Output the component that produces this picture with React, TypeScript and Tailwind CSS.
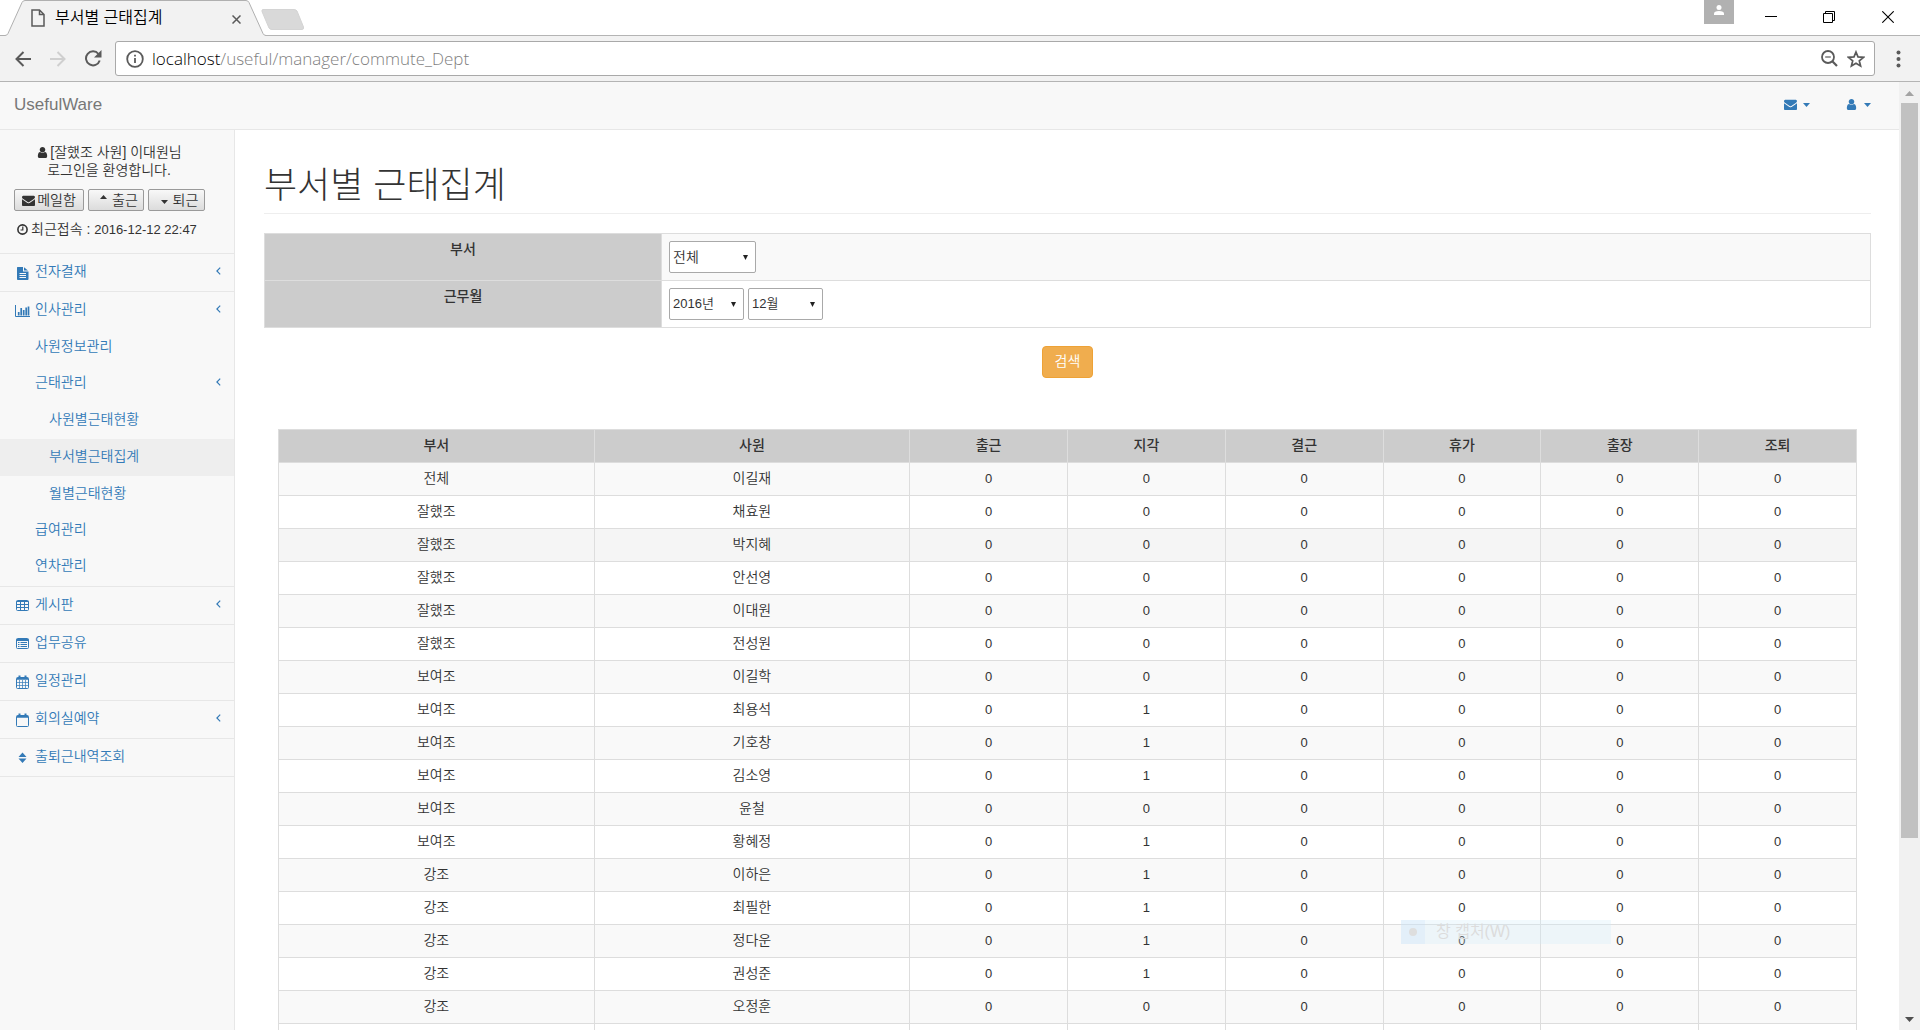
import type { ReactNode } from "react";

const kr = "font-['Liberation_Sans','Noto_Sans_CJK_KR',sans-serif] font-[350]";

const envelopePath =
  "M1792 710v794q0 66-47 113t-113 47h-1472q-66 0-113-47t-47-113v-794q44 49 101 87 362 246 497 345 57 42 92.5 65.5t94.5 48 110 24.5h2q51 0 110-24.5t94.5-48 92.5-65.5q170-123 498-345 57-39 100-87zm0-294q0 79-49 151t-122 123q-376 261-468 325-10 7-42.5 31t-54 38.5-52 32.5-57.5 27-50 9h-2q-23 0-50-9t-57.5-27-52-32.5-54-38.5-42.5-31q-91-64-262-182.5t-205-142.5q-62-42-117-115.5t-55-136.5q0-78 41.5-130t118.5-52h1472q65 0 112.5 47t47.5 113z";
const userPath =
  "M1536 1399q0 109-62.5 187t-150.5 78h-854q-88 0-150.5-78t-62.5-187q0-85 8.5-160.5t31.5-152 58.5-131 94-89 134.5-34.5q131 128 313 128t313-128q76 0 134.5 34.5t94 89 58.5 131 31.5 152 8.5 160.5zm-256-887q0 159-112.5 271.5t-271.5 112.5-271.5-112.5-112.5-271.5 112.5-271.5 271.5-112.5 271.5 112.5 112.5 271.5z";

function Envelope() {
  return (
    <svg viewBox="0 0 1792 1792" className="h-[13px] w-[13px] shrink-0" fill="currentColor" aria-hidden="true">
      <path d={envelopePath} />
    </svg>
  );
}

function User() {
  return (
    <svg viewBox="0 0 1792 1792" className="h-[13px] w-[13px] shrink-0" fill="currentColor" aria-hidden="true">
      <path d={userPath} />
    </svg>
  );
}

function Caret({ up = false }: { up?: boolean }) {
  return (
    <svg viewBox="0 0 7 4" className="h-1 w-[7px] shrink-0" fill="currentColor" aria-hidden="true">
      <path d={up ? "M0 4 3.5 0 7 4Z" : "M0 0H7L3.5 4Z"} />
    </svg>
  );
}

function Svg({ children, w = 15 }: { children: ReactNode; w?: number }) {
  return (
    <svg width={w} height="15" viewBox={`0 0 ${w} 15`} className="shrink-0" fill="none" stroke="currentColor" aria-hidden="true">
      {children}
    </svg>
  );
}

const icons: Record<string, ReactNode> = {
  file: (
    <Svg>
      <path d="M2 2.500Q2 2 2.600 2H8v4.400H13.500V14q0 1-.8 1H2.800Q2 15 2 14Z" fill="currentColor" stroke="none" />
      <path d="M9 2.200 13 5.600H9Z" fill="currentColor" stroke="none" />
      <path d="M4.500 8.500H11M4.500 10.500H11M4.500 12.500H11" stroke="#f8f8f8" strokeWidth="1" />
    </Svg>
  ),
  chart: (
    <Svg>
      <path d="M.5 2V13.500H15" />
      <path d="M3.700 12.500V9M6.200 12.500V5M8.700 12.500V7M11.200 12.500V4.500M13.500 12.500V3.500" strokeWidth="1.700" />
    </Svg>
  ),
  table: (
    <Svg>
      <rect x="1.500" y="2.500" width="12" height="10" rx="1" />
      <path d="M1.500 3.500H13.500M1.500 6.500H13.500M1.500 9.500H13.500M5.500 3V12.500M9.500 3V12.500" />
    </Svg>
  ),
  list: (
    <Svg>
      <rect x="1.500" y="2.500" width="12" height="10" rx="1" />
      <path d="M1.500 4H13.500" strokeWidth="2" />
      <path d="M3 6.500H4.500M5.500 6.500H12M3 8.500H4.500M5.500 8.500H12M3 10.500H4.500M5.500 10.500H12" />
    </Svg>
  ),
  calendar: (
    <Svg>
      <rect x="1.500" y="3.500" width="12" height="11" rx="1" />
      <path d="M2 4.800H13M4.500 1.500V4.500M10.500 1.500V4.500" strokeWidth="2" />
      <path d="M4.500 6V14M7.500 6V14M10.500 6V14M2 8.500H13M2 11.500H13" strokeWidth=".7" />
    </Svg>
  ),
  calendarO: (
    <Svg>
      <rect x="1.500" y="3.500" width="12" height="11" rx="1" />
      <path d="M2 4.800H13M4.500 1.500V4.500M10.500 1.500V4.500" strokeWidth="2" />
    </Svg>
  ),
  sort: (
    <Svg>
      <path d="M3.500 7 7.500 2.500 11.500 7ZM3.500 8.500H11.500L7.500 13Z" fill="currentColor" stroke="none" />
    </Svg>
  ),
};

function AngleLeft() {
  return (
    <svg viewBox="0 0 5 8" className="mr-[13px] ml-auto h-2 w-[5px]" fill="none" stroke="currentColor" strokeWidth="1.2" aria-hidden="true">
      <path d="M4.200.600.900 4 4.200 7.400" />
    </svg>
  );
}

type Item = { label: string; icon?: string; arrow?: boolean; active?: boolean; children?: Item[] };

const menu: Item[] = [
  { label: "전자결재", icon: "file", arrow: true },
  {
    label: "인사관리",
    icon: "chart",
    arrow: true,
    children: [
      { label: "사원정보관리" },
      {
        label: "근태관리",
        arrow: true,
        children: [{ label: "사원별근태현황" }, { label: "부서별근태집계", active: true }, { label: "월별근태현황" }],
      },
      { label: "급여관리" },
      { label: "연차관리" },
    ],
  },
  { label: "게시판", icon: "table", arrow: true },
  { label: "업무공유", icon: "list" },
  { label: "일정관리", icon: "calendar" },
  { label: "회의실예약", icon: "calendarO", arrow: true },
  { label: "출퇴근내역조회", icon: "sort" },
];

function TabStrip() {
  return (
    <div className="flex h-9 items-start border-b border-[#b4b4b4] bg-white">
      <div className="relative h-9 w-[265px] shrink-0">
        <svg width="305" height="36" viewBox="0 0 305 36" className="absolute top-0 left-0" aria-hidden="true">
          <path d="M0 35.500H5Q7 35.500 8 33.500L22 2.500Q23 .5 25 .5H246Q248 .5 249 2.500L263 33.500Q264 35.500 266 35.500V36H0Z" fill="#f2f2f2" />
          <path d="M0 35.500H5Q7 35.500 8 33.500L22 2.500Q23 .5 25 .5H246Q248 .5 249 2.500L263 33.500Q264 35.500 266 35.500" fill="none" stroke="#b0b0b0" />
          <path d="M263 9.500H294Q296 9.500 297 11L303.500 27Q304 29.500 302 29.500H272Q270 29.500 269 28L262 11.500Q261.500 9.500 263 9.500Z" fill="#d9d9d9" stroke="#d4d4d4" />
        </svg>
        <div className="relative flex h-9 items-center pl-[31px]">
          <svg width="14" height="18" viewBox="0 0 14 18" fill="none" stroke="#5a5a5a" strokeWidth="1.500" aria-hidden="true">
            <path d="M1 1H8.500L13 5.500V17H1ZM8.500 1V5.500H13" />
          </svg>
          <span className="ml-[10px] text-base leading-5 text-black">부서별 근태집계</span>
          <button aria-label="탭 닫기" className="mr-[24px] ml-auto pt-[2px]">
            <svg width="9" height="9" viewBox="0 0 9 9" stroke="#5a5a5a" strokeWidth="1.500" aria-hidden="true">
              <path d="M.5.5 8.500 8.500M8.500.5.5 8.500" />
            </svg>
          </button>
        </div>
      </div>
      <div className="ml-auto flex items-start">
        <div className="flex h-6 w-[30px] items-start justify-center bg-[#b1b1b1] pt-[5px]">
          <svg width="10" height="10" viewBox="0 0 10 10" fill="#fff" aria-hidden="true">
            <circle cx="5" cy="2.500" r="2.500" />
            <path d="M0 10V8.500Q0 6 5 6T10 8.500V10Z" />
          </svg>
        </div>
        <button aria-label="최소화" className="mt-[11px] ml-[31px]">
          <svg width="12" height="12" viewBox="0 0 12 12" stroke="#000" aria-hidden="true">
            <path d="M0 5.500H12" />
          </svg>
        </button>
        <button aria-label="이전 크기로" className="mt-[11px] ml-[46px]">
          <svg width="12" height="12" viewBox="0 0 12 12" fill="none" stroke="#000" aria-hidden="true">
            <path d="M.5 2.500H9.500V11.500H.5ZM2.500 2.500V.5H11.500V9.500H9.500" />
          </svg>
        </button>
        <button aria-label="닫기" className="mt-[11px] mr-[26px] ml-[47px]">
          <svg width="12" height="12" viewBox="0 0 12 12" stroke="#000" strokeWidth="1.100" aria-hidden="true">
            <path d="M.3.300 11.700 11.700M11.700.300.300 11.700" />
          </svg>
        </button>
      </div>
    </div>
  );
}

function Toolbar() {
  return (
    <div className="flex h-[46px] items-center border-b border-[#b4b4b4] bg-[#f2f2f2] pl-[15px]">
      <button aria-label="뒤로">
        <svg width="16" height="16" viewBox="0 0 16 16" fill="none" stroke="#5a5a5a" strokeWidth="2" aria-hidden="true">
          <path d="M16 8H1.500M8.500 1 1.500 8 8.500 15" />
        </svg>
      </button>
      <button aria-label="앞으로" className="ml-[19px]">
        <svg width="16" height="16" viewBox="0 0 16 16" fill="none" stroke="#cfcfcf" strokeWidth="2" aria-hidden="true">
          <path d="M0 8H14.500M7.500 1 14.500 8 7.500 15" />
        </svg>
      </button>
      <button aria-label="새로고침" className="ml-[18px]">
        <svg width="18" height="17" viewBox="0 0 18 17" fill="none" stroke="#5a5a5a" strokeWidth="2" aria-hidden="true">
          <path d="M14.500 4A7 7 0 1 0 15.700 10.500" />
          <path d="M17.500 0V7.500H10Z" fill="#5a5a5a" stroke="none" />
        </svg>
      </button>
      <div className="ml-[13px] flex h-[35px] flex-1 items-center rounded-[3px] border border-[#a9a9a9] bg-white pr-[9px] pl-[10px]">
        <svg width="18" height="18" viewBox="0 0 18 18" fill="none" stroke="#5a5a5a" strokeWidth="1.800" aria-hidden="true">
          <circle cx="9" cy="9" r="7.800" />
          <path d="M9 8V13M9 4.800V6.600" />
        </svg>
        <p className="ml-[8px] flex-1 font-['Open_Sans','Noto_Sans',sans-serif] text-[17px] leading-6 text-[#808080]">
          <span className="text-black">localhost</span>/useful/manager/commute_Dept
        </p>
        <button aria-label="축소">
          <svg width="17" height="17" viewBox="0 0 17 17" fill="none" stroke="#5a5a5a" strokeWidth="1.800" aria-hidden="true">
            <circle cx="7" cy="7" r="6" />
            <path d="M11.300 11.300 16 16" strokeWidth="2.200" />
            <path d="M4.200 7H9.800" strokeWidth="1.200" />
          </svg>
        </button>
        <button aria-label="북마크" className="ml-[9px]">
          <svg width="18" height="18" viewBox="0 0 18 18" fill="none" stroke="#5a5a5a" strokeWidth="1.700" aria-hidden="true">
            <path d="M9 2 11 6.900 16.500 7.300 12.300 10.800 13.600 16 9 13.200 4.400 16 5.700 10.800 1.500 7.300 7 6.900Z" />
          </svg>
        </button>
      </div>
      <button aria-label="메뉴" className="mr-[19px] ml-[21px]">
        <svg width="5" height="18" viewBox="0 0 5 18" fill="#5a5a5a" aria-hidden="true">
          <circle cx="2.500" cy="2.500" r="2" />
          <circle cx="2.500" cy="9" r="2" />
          <circle cx="2.500" cy="15.500" r="2" />
        </svg>
      </button>
    </div>
  );
}

const smallButton =
  "flex h-[22px] justify-center rounded-[2px] border border-[#9a9a9a] bg-linear-to-b from-[#f8f8f8] to-[#dcdcdc] text-sm leading-[18px] text-[#333]";

function Sidebar() {
  return (
    <aside className="w-[235px] shrink-0 border-r border-[#e7e7e7] bg-[#f8f8f8]">
      <div className="flex h-[124px] flex-col border-b border-[#e7e7e7] pt-[13px] pl-[14px] text-sm text-[#333]">
        <div className="w-[190px] text-center leading-[18px]">
          <div className="flex items-center justify-center gap-px">
            <User />
            <span>[잘했조 사원] 이대원님</span>
          </div>
          <div>로그인을 환영합니다.</div>
        </div>
        <div className="mt-[10px] flex gap-1">
          <button className={smallButton + " w-[70px] items-center gap-[2px]"}>
            <Envelope />
            메일함
          </button>
          <button className={smallButton + " w-[56px] items-center gap-[5px] pl-[6px]"}>
            <span className="pb-[6px]">
              <Caret up />
            </span>
            출근
          </button>
          <button className={smallButton + " w-[57px] items-center gap-[5px] pl-[6px]"}>
            <span className="pt-1">
              <Caret />
            </span>
            퇴근
          </button>
        </div>
        <div className="mt-2 flex items-center gap-[3px] pl-[3px] leading-5">
          <svg width="11" height="11" viewBox="0 0 11 11" fill="none" stroke="currentColor" strokeWidth="1.600" aria-hidden="true">
            <circle cx="5.500" cy="5.500" r="4.600" />
            <path d="M5.800 2.500V6H3.500" strokeWidth="1.200" />
          </svg>
          <span>
            최근접속 : <span className="text-[13px]">2016-12-12 22:47</span>
          </span>
        </div>
      </div>
      <ul className="text-sm leading-5 text-[#337ab7]">
        {menu.map((top) => (
          <li key={top.label} className="border-b border-[#e7e7e7]">
            <a href="#" className="flex h-[37px] items-center pb-1 pl-[15px]">
              <span className="pt-1">{icons[top.icon as string]}</span>
              <span className="ml-[5px]">{top.label}</span>
              {top.arrow && <AngleLeft />}
            </a>
            {top.children && (
              <ul className="py-px">
                {top.children.map((sub) => (
                  <li key={sub.label}>
                    <a href="#" className="flex h-9 items-center pb-1 pl-[35px]">
                      {sub.label}
                      {sub.arrow && <AngleLeft />}
                    </a>
                    {sub.children && (
                      <ul>
                        {sub.children.map((leaf) => (
                          <li key={leaf.label}>
                            <a
                              href="#"
                              className={"flex h-[37px] items-center pb-1 pl-[49px] " + (leaf.active ? "bg-[#eee]" : "")}
                            >
                              {leaf.label}
                            </a>
                          </li>
                        ))}
                      </ul>
                    )}
                  </li>
                ))}
              </ul>
            )}
          </li>
        ))}
      </ul>
    </aside>
  );
}

function Select({ label, value, size }: { label: string; value: string; size: string }) {
  return (
    <span className={"relative inline-block h-8 " + size}>
      <select
        aria-label={label}
        defaultValue={value}
        className="h-8 w-full appearance-none rounded-[2px] border border-[#a9a9a9] bg-white pl-[3px] text-[#333]"
      >
        <option>{value}</option>
      </select>
      <svg width="5" height="5" viewBox="0 0 5 5" className="pointer-events-none absolute top-[14px] right-2" fill="#222" aria-hidden="true">
        <path d="M0 0H5L2.500 5Z" />
      </svg>
    </span>
  );
}

const columns = ["부서", "사원", "출근", "지각", "결근", "휴가", "출장", "조퇴"];

const people: [string, string, number][] = [
  ["전체", "이길재", 0],
  ["잘했조", "채효원", 0],
  ["잘했조", "박지혜", 0],
  ["잘했조", "안선영", 0],
  ["잘했조", "이대원", 0],
  ["잘했조", "전성원", 0],
  ["보여조", "이길학", 0],
  ["보여조", "최용석", 1],
  ["보여조", "기호창", 1],
  ["보여조", "김소영", 1],
  ["보여조", "윤철", 0],
  ["보여조", "황혜정", 1],
  ["강조", "이하은", 1],
  ["강조", "최필한", 1],
  ["강조", "정다운", 1],
  ["강조", "권성준", 1],
  ["강조", "오정훈", 0],
];

const cell = "h-[33px] border border-[#ddd] px-0 pt-0 text-center";

function rowColor(i: number) {
  if (i === 2) return "bg-[#f5f5f5]";
  return i % 2 === 0 ? "bg-[#f9f9f9]" : "bg-white";
}

function Content() {
  return (
    <main className="min-w-0 flex-1 bg-white pr-[28px] pl-[29px]">
      <h1 className="border-b border-[#eee] pt-8 pb-1 text-4xl leading-[47px] font-light text-[#333]">
        부서별 근태집계
      </h1>
      <table className="mt-[19px] w-full table-fixed border-collapse text-sm leading-5 text-[#333]">
        <colgroup>
          <col className="w-[397px]" />
          <col />
        </colgroup>
        <tbody>
          <tr className="h-[47px] bg-[#f9f9f9]">
            <th className="border border-[#ddd] bg-[#ccc] pt-[5px] align-top font-medium">부서</th>
            <td className="border border-[#ddd] pl-[7px]">
              <div className="flex">
                <Select label="부서" value="전체" size="w-[87px] text-sm" />
              </div>
            </td>
          </tr>
          <tr className="h-[47px]">
            <th className="border border-[#ddd] bg-[#ccc] pt-[5px] align-top font-medium">근무월</th>
            <td className="border border-[#ddd] pl-[7px]">
              <div className="flex gap-1">
                <Select label="년도" value="2016년" size="w-[75px] text-[13px]" />
                <Select label="월" value="12월" size="w-[75px] text-[13px]" />
              </div>
            </td>
          </tr>
        </tbody>
      </table>
      <div className="mt-[18px] flex justify-center">
        <button className="h-8 w-[51px] rounded-[4px] border border-[#eea236] bg-[#f0ad4e] pb-[2px] text-sm leading-5 text-white">
          검색
        </button>
      </div>
      <div className="mt-[51px] px-[14px]">
        <table className="w-full table-fixed border-collapse text-sm leading-5 text-[#333]">
          <colgroup>
            {columns.map((c, i) => (
              <col key={c} className={i < 2 ? "w-1/5" : "w-1/10"} />
            ))}
          </colgroup>
          <thead>
            <tr className="bg-[#ccc]">
              {columns.map((c) => (
                <th key={c} className={cell + " pb-[3px] font-medium"}>
                  {c}
                </th>
              ))}
            </tr>
          </thead>
          <tbody>
            {people.map(([dept, name, late], i) => (
              <tr key={name} className={rowColor(i)}>
                <td className={cell + " pb-[3px]"}>{dept}</td>
                <td className={cell + " pb-[3px]"}>{name}</td>
                {[0, late, 0, 0, 0, 0].map((n, k) => (
                  <td key={k} className={cell + " pb-0 text-[13px]"}>
                    {n}
                  </td>
                ))}
              </tr>
            ))}
            <tr>
              {columns.map((c) => (
                <td key={c} className={cell} />
              ))}
            </tr>
          </tbody>
        </table>
      </div>
    </main>
  );
}

function Scrollbar() {
  return (
    <div className="flex w-[21px] shrink-0 flex-col items-center bg-[#f1f1f1] pt-[9px] pb-2" aria-hidden="true">
      <svg width="9" height="5" viewBox="0 0 9 5" fill="#a3a3a3">
        <path d="M0 5 4.500 0 9 5Z" />
      </svg>
      <div className="mt-[7px] flex w-[17px] flex-1 flex-col">
        <div className="h-[calc(80%+4px)] bg-[#c1c1c1]" />
      </div>
      <svg width="9" height="5" viewBox="0 0 9 5" fill="#505050">
        <path d="M0 0H9L4.500 5Z" />
      </svg>
    </div>
  );
}

export default function App() {
  return (
    <div className={"relative flex h-screen flex-col overflow-hidden " + kr}>
      <TabStrip />
      <Toolbar />
      <div className="flex min-h-0 flex-1">
        <div className="flex min-w-0 flex-1 flex-col overflow-hidden">
          <nav className="flex h-12 shrink-0 items-center border-b border-[#e7e7e7] bg-[#f8f8f8] pr-7 pb-[2px] pl-[14px]">
            <a href="#" className="text-[17px] leading-5 text-[#777]">
              UsefulWare
            </a>
            <div className="ml-auto flex items-center gap-[35px] text-[#337ab7]">
              <button aria-label="메일" className="flex items-center gap-[6px]">
                <Envelope />
                <Caret />
              </button>
              <button aria-label="사용자" className="flex items-center gap-[6px]">
                <User />
                <Caret />
              </button>
            </div>
          </nav>
          <div className="flex min-h-0 flex-1">
            <Sidebar />
            <Content />
          </div>
        </div>
        <Scrollbar />
      </div>
      <div className="absolute top-[920px] right-[309px] flex h-6 w-[210px] items-center bg-[#d2ecfa]/30 text-base leading-5 text-[#dcdcdc]">
        <span className="flex h-6 w-6 items-center justify-center bg-[#c8e0fa]/25">
          <span className="h-2 w-2 rounded-full bg-[#dedede]" />
        </span>
        <span className="ml-[11px]">창 캡처(W)</span>
      </div>
    </div>
  );
}
